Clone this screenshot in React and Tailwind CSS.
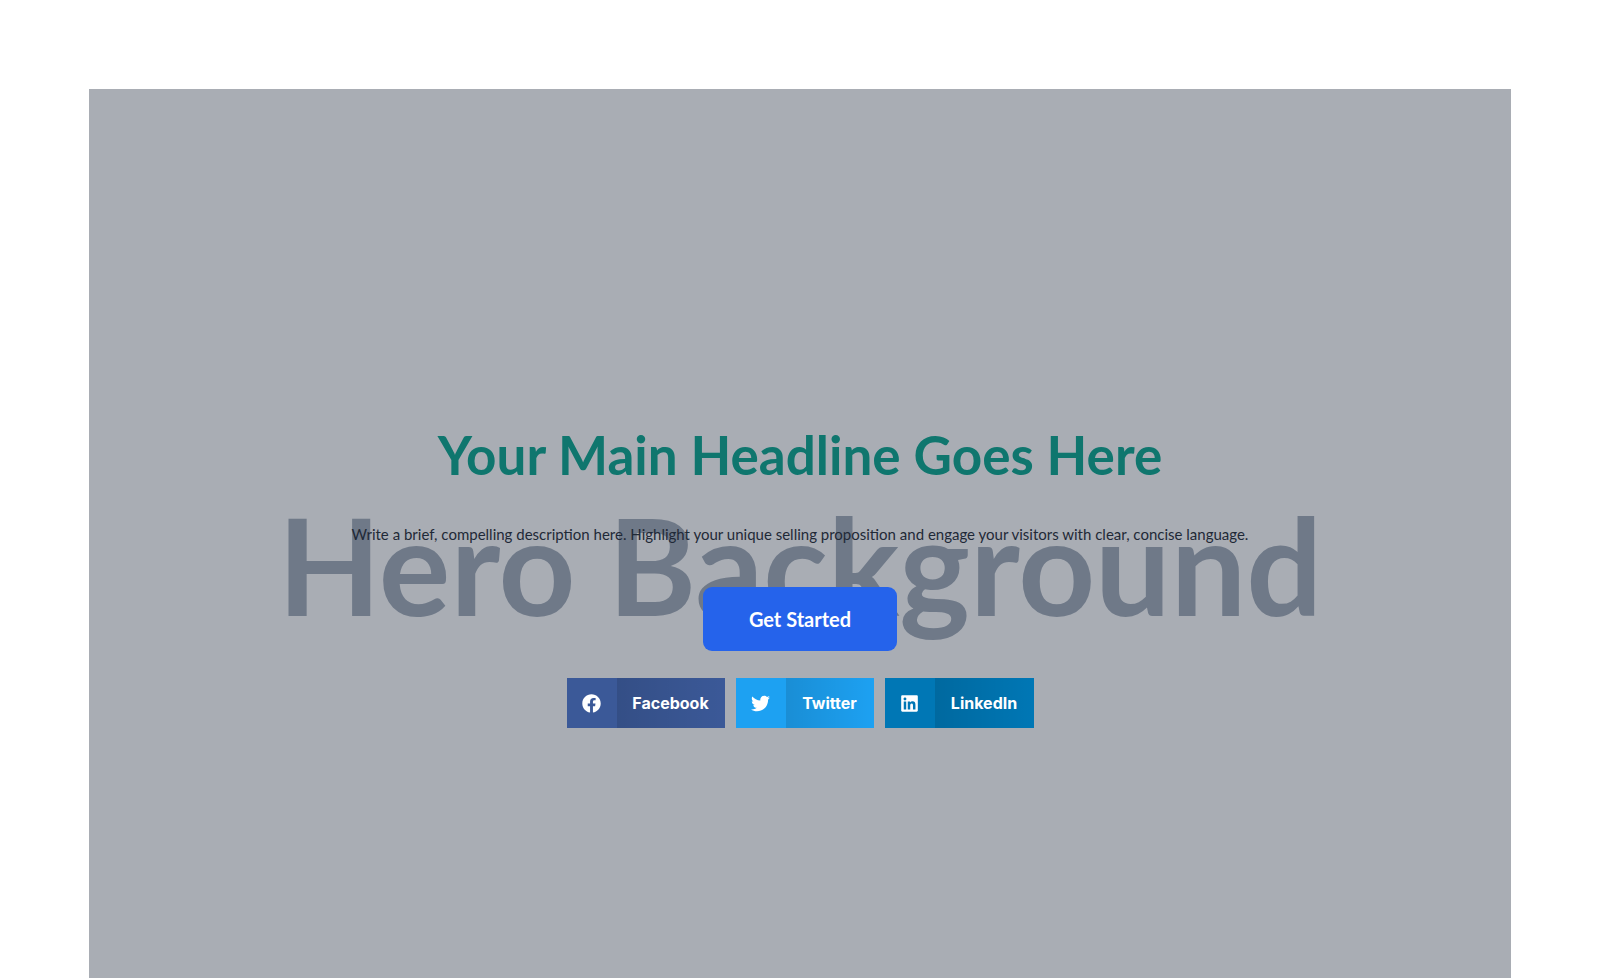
import React from "react";
import { FaFacebook, FaTwitter, FaLinkedin } from "react-icons/fa";

const networks = [
  { name: "Facebook", Icon: FaFacebook, color: "bg-[#3b5998]", width: "w-[158px]" },
  { name: "Twitter", Icon: FaTwitter, color: "bg-[#1da1f2]", width: "w-[138px]" },
  { name: "LinkedIn", Icon: FaLinkedin, color: "bg-[#0077b5]", width: "w-[149px]" },
];

function ShareButton({ name, Icon, color, width }) {
  return (
    <button type="button" className={`flex h-[50px] items-stretch text-white ${color} ${width}`}>
      <span className="flex w-[50px] items-center justify-center">
        <Icon className="size-[19px]" aria-hidden="true" />
      </span>
      <span className="flex flex-1 items-center justify-center bg-linear-to-r from-black/12 to-transparent font-['Inter',sans-serif] text-[16px] font-bold">
        {name}
      </span>
    </button>
  );
}

export default function App() {
  return (
    <main className="flex min-h-screen flex-col bg-white px-[89px] pt-[89px]">
      <section className="relative isolate flex flex-1 flex-col items-center overflow-hidden bg-[#a9adb4] pt-[332px]">
        <div
          aria-hidden="true"
          className="absolute inset-x-0 top-[396px] -z-10 text-center font-['Lato',sans-serif] text-[134px] leading-[160px] font-bold whitespace-nowrap text-[#6f7988]"
        >
          Hero Background
        </div>
        <h1 className="text-center font-['Lato',sans-serif] text-[53px] leading-[68px] font-bold text-[#0f766e]">
          Your Main Headline Goes Here
        </h1>
        <p className="mt-[32px] text-center font-['Lato',sans-serif] text-[15px] leading-[26px] text-[#1f2937]">
          Write a brief, compelling description here. Highlight your unique selling proposition and engage your
          visitors with clear, concise language.
        </p>
        <button
          type="button"
          className="mt-[40px] h-[64px] w-[194px] rounded-[9px] bg-[#2563eb] font-['Lato',sans-serif] text-[20px] font-bold text-white"
        >
          Get Started
        </button>
        <div className="mt-[27px] flex gap-[11px]">
          {networks.map((network) => (
            <ShareButton key={network.name} {...network} />
          ))}
        </div>
      </section>
    </main>
  );
}
